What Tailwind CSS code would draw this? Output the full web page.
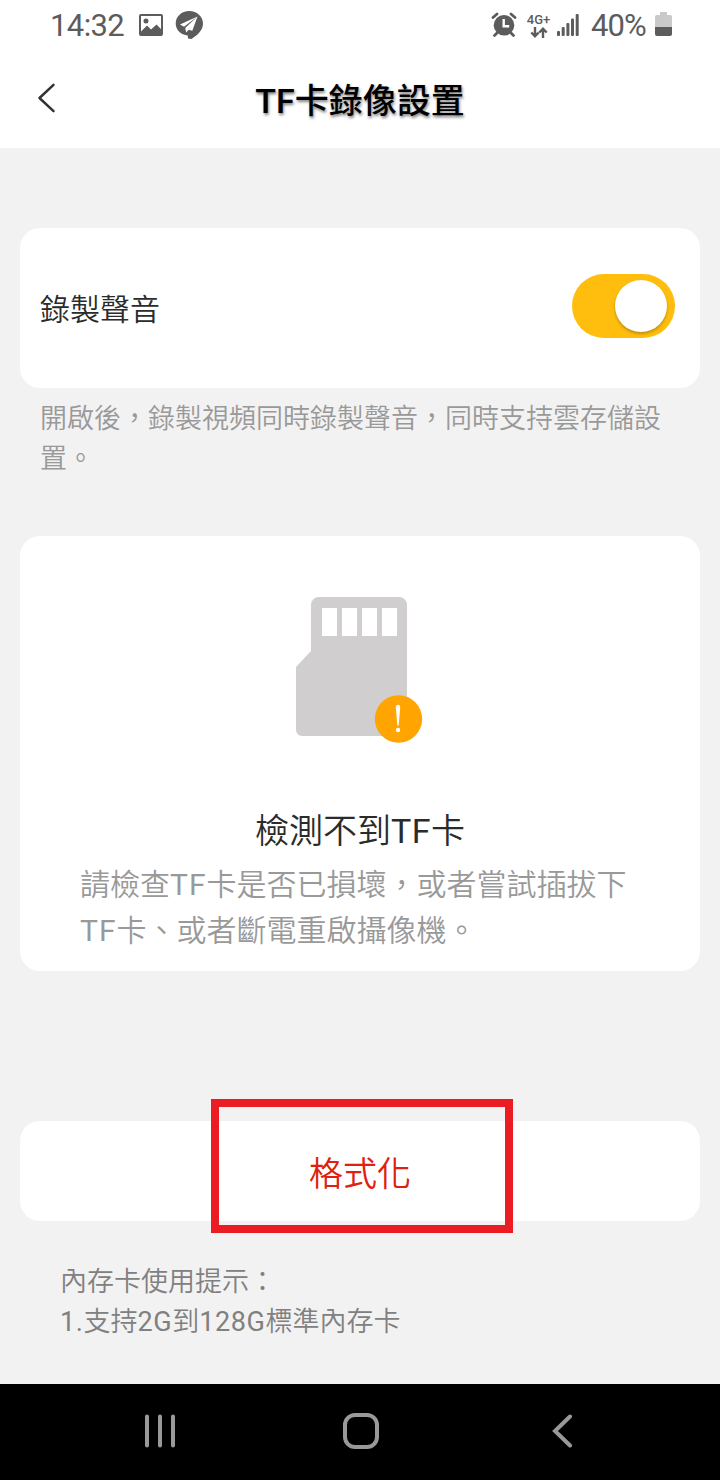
<!DOCTYPE html>
<html lang="zh-Hant">
<head>
<meta charset="utf-8">
<meta name="viewport" content="width=device-width, initial-scale=1">
<title>TF卡錄像設置</title>
<script src="https://cdn.jsdelivr.net/npm/@tailwindcss/browser@4"></script>
</head>
<body class="bg-[#f2f2f2]">
<div class="w-[720px] h-[1480px] flex flex-col overflow-hidden bg-[#f2f2f2] font-[Roboto,'Noto_Sans_CJK_TC_DemiLight','Noto_Sans_CJK_TC',sans-serif] font-normal">
  <!-- Status bar -->
  <div class="h-[50px] shrink-0 bg-white flex items-center text-[#5c5c5c] pl-[50px] pr-[48px]">
    <span class="w-[88px] text-[31px] leading-[50px] tracking-[-0.6px] mt-px">14:32</span>
    <svg class="w-[26px] h-6 shrink-0" viewBox="0 0 26 24"><path fill="currentColor" fill-rule="evenodd" d="M3 1h20a2 2 0 0 1 2 2v18a2 2 0 0 1-2 2H3a2 2 0 0 1-2-2V3a2 2 0 0 1 2-2zm0 2v15.500l6-6 4 4 5.500-5 4.500 4.500V3zM8 5.500a2.500 2.500 0 1 1 0 5 2.500 2.500 0 0 1 0-5z"/></svg>
    <svg class="w-7 h-[30px] shrink-0 ml-[11px] -mt-px" viewBox="0 0 28 30"><path fill="currentColor" d="M14.300 1C21.800 1 28 6.500 28 13.500c0 7-6 12-11.500 15.500l-3.500-.5-.3-3C6 25 .7 20 .7 13.500.7 6.500 6.500 1 14.300 1z"/><path fill="#fff" d="M22.500 6.500L5 14.500l4 2.300zM22.500 6.500L10.200 18l1 4.500 2.500-2.700 3.600 1z"/></svg>
    <div class="flex-1"></div>
    <svg class="w-[26px] h-[26px] shrink-0" viewBox="0 0 26 26"><g fill="none" stroke="currentColor" stroke-width="2.800" stroke-linecap="round"><path d="M2 5.500l4-3.500M24 5.500l-4-3.500M6 21l-2.500 2.500M20 21l2.500 2.500"/></g><circle cx="13" cy="13.300" r="10.300" fill="currentColor"/><path d="M12.700 7v7.200h5.500" fill="none" stroke="#fff" stroke-width="2.400"/></svg>
    <div class="ml-[9px] w-[25px] shrink-0 flex flex-col items-center">
      <span class="text-[13px] leading-[14px] font-medium">4G+</span>
      <svg class="w-[18px] h-[11px]" viewBox="0 0 18 11"><path fill="none" stroke="currentColor" stroke-width="2.400" d="M5 0v9M1.300 5.500L5 9.200l3.700-3.700M13 11V2M9.300 5.500L13 1.800l3.700 3.700"/></svg>
    </div>
    <svg class="ml-[6px] w-[22px] h-6 shrink-0" viewBox="0 0 22 24"><g fill="currentColor"><rect x="0" y="18" width="3" height="5" rx="1"/><rect x="4.700" y="14" width="3" height="9" rx="1"/><rect x="9.400" y="10" width="3" height="13" rx="1"/><rect x="14" y="5.500" width="3" height="17.500" rx="1"/><rect x="18.700" y="1" width="3" height="22" rx="1"/></g></svg>
    <span class="ml-[12px] w-[58px] text-[31px] leading-[50px] tracking-[-0.9px] whitespace-nowrap mt-px">40%</span>
    <svg class="ml-[6px] w-[17px] h-6 shrink-0 -mt-[2px]" viewBox="0 0 17 24"><path fill="#c9c9c9" d="M5 0h7v3h3a2 2 0 0 1 2 2v10H0V5a2 2 0 0 1 2-2h3z"/><path fill="currentColor" d="M0 15h17v7a2 2 0 0 1-2 2H2a2 2 0 0 1-2-2z"/></svg>
  </div>
  <!-- Title bar -->
  <header class="h-[98px] shrink-0 bg-white grid grid-cols-[80px_1fr_80px] items-center">
    <svg class="ml-[36px] w-5 h-[30px] -mt-[3px]" viewBox="0 0 20 30"><path d="M17.500 1.800L3.500 15l14 13.200" fill="none" stroke="#333" stroke-width="2.500" stroke-linecap="round" stroke-linejoin="round"/></svg>
    <h1 class="mt-[4px] text-center text-[34px] leading-[50px] font-medium text-black [text-shadow:1px_2px_3px_rgba(0,0,0,0.5)] font-[Roboto,'Noto_Sans_CJK_TC',sans-serif]">TF卡錄像設置</h1>
  </header>
  <!-- Page content -->
  <main class="h-[1236px] shrink-0 pt-20 px-5">
    <section class="h-40 rounded-[20px] bg-white flex items-center justify-between pl-5 pr-[25px]">
      <span class="mt-[4px] text-[30px] leading-[44px] font-[350] text-[#2b2b2b]">錄製聲音</span>
      <div class="w-[103px] h-16 -mt-1 rounded-full bg-[#ffbe0d] flex items-center justify-end pr-2">
        <div class="size-[52px] rounded-full bg-white shadow-[0_2px_3px_rgba(0,0,0,0.25)]"></div>
      </div>
    </section>
    <p class="mt-[11px] pl-5 w-[660px] text-[27px] leading-10 font-[350] text-[#999]">開啟後，錄製視頻同時錄製聲音，同時支持雲存儲設<br>置。</p>
    <section class="mt-[57px] h-[435px] rounded-[20px] bg-white flex flex-col items-center pt-[60px]">
      <svg class="w-32 h-[148px] shrink-0" viewBox="0 0 128 148"><path fill="#d0cece" d="M24 1h79a8 8 0 0 1 8 8v131H6a6 6 0 0 1-6-6V71l15-16V9a8 8 0 0 1 8-8z"/><path fill="#fff" d="M26 12h15v28H26zM46 12h15v28H46zM66 12h15v28H66zM86 12h15v28H86z"/><circle cx="102.500" cy="123" r="23.700" fill="#ffa400"/><path fill="#fff" d="M99.800 111a2.200 2.200 0 0 1 4.400 0l-1.500 18.500h-1.400z"/><circle cx="102" cy="134" r="2.200" fill="#fff"/></svg>
      <h2 class="mt-[62px] text-[34px] leading-[50px] font-[350] text-[#2b2b2b]">檢測不到<span class="font-normal tracking-[0.5px]">TF</span>卡</h2>
      <p class="mt-[6px] w-[560px] text-[30px] leading-[46px] font-[350] text-[#999]">請檢查<span class="font-normal tracking-[1px]">TF</span>卡是否已損壞，或者嘗試插拔下<br><span class="font-normal tracking-[1px]">TF</span>卡、或者斷電重啟攝像機。</p>
    </section>
    <section class="relative mt-[150px] h-[100px] rounded-[20px] bg-white flex items-center justify-center">
      <button class="mt-[5px] text-[34px] leading-[50px] font-[350] text-[#e02010]">格式化</button>
      <div class="absolute left-[191px] -top-[22px] w-[302px] h-[134px] border-8 border-[#eb1c24]"></div>
    </section>
    <p class="mt-[41px] pl-10 text-[27px] leading-10 font-[350] text-[#808080]">內存卡使用提示：<br><span class="font-normal tracking-[0.6px]">1.</span>支持<span class="font-normal tracking-[0.6px]">2G</span>到<span class="font-normal tracking-[0.6px]">128G</span>標準內存卡</p>
  </main>
  <!-- Navigation bar -->
  <nav class="h-24 shrink-0 bg-black flex items-center pl-[144px] pb-[2px]">
    <svg class="w-8 h-[34px]" viewBox="0 0 32 34"><path d="M3 2.500v29M16 2.500v29M29 2.500v29" stroke="#999" stroke-width="4" stroke-linecap="round"/></svg>
    <svg class="ml-[167px] w-9 h-9" viewBox="0 0 36 36"><rect x="2" y="2" width="32" height="32" rx="10" fill="none" stroke="#999" stroke-width="4"/></svg>
    <svg class="ml-[172px] w-[22px] h-[34px]" viewBox="0 0 22 34"><path d="M19 2.500L4 17l15 14.500" fill="none" stroke="#999" stroke-width="4" stroke-linecap="round"/></svg>
  </nav>
</div>
</body>
</html>
